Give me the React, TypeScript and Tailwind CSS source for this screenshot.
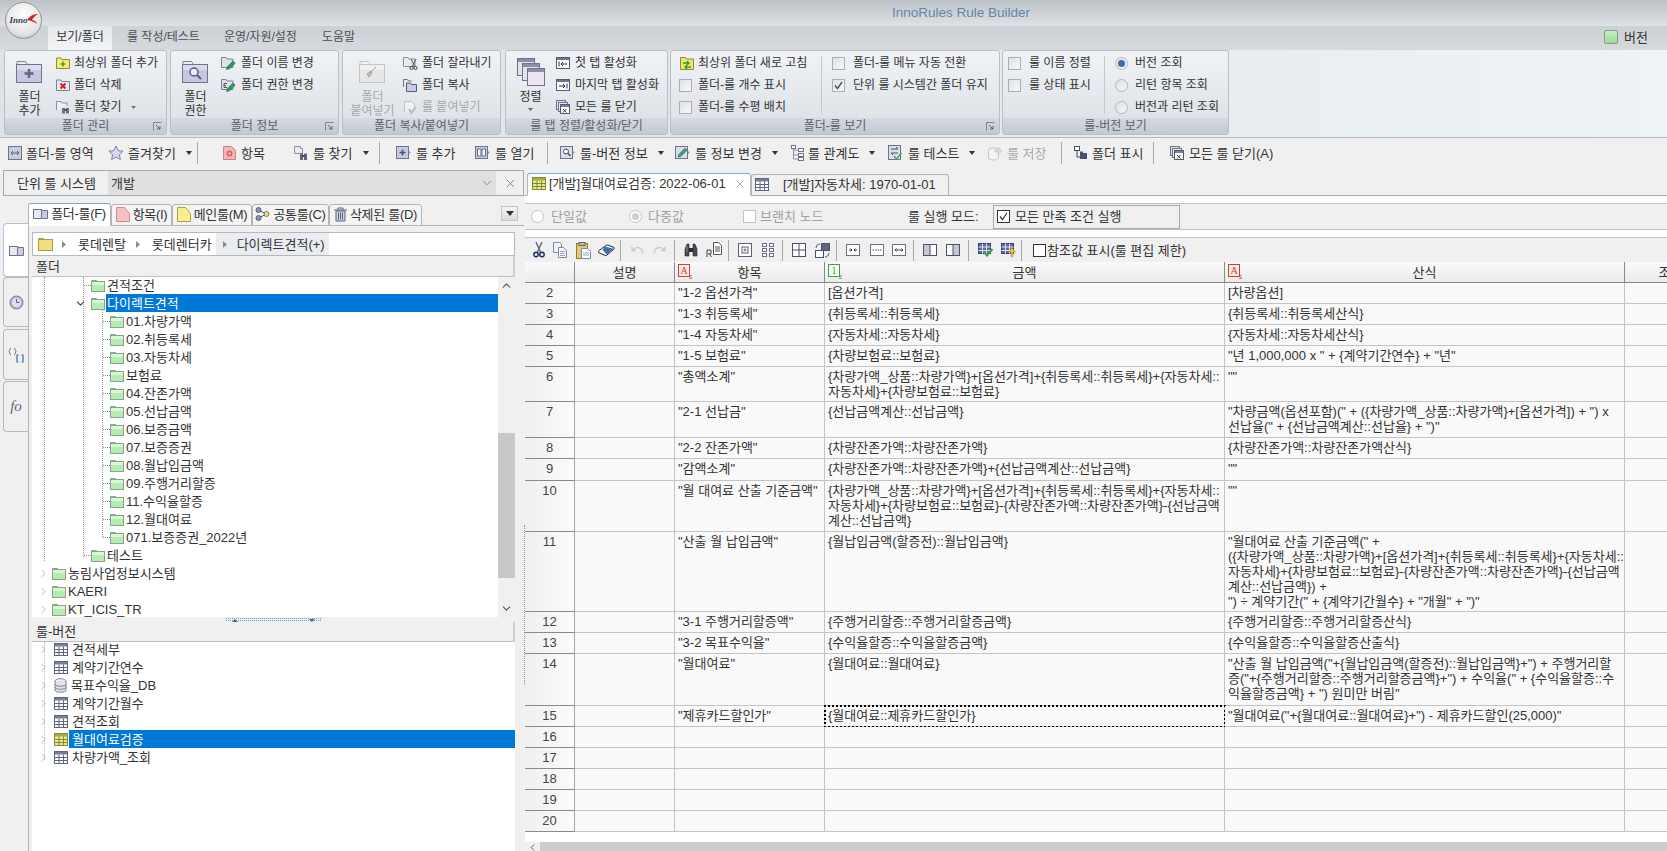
import type { ReactNode } from "react";
import { ChevronDown, ChevronRight, ChevronUp, ChevronLeft, X } from "lucide-react";

// small svg wrapper for the hand drawn toolbar icons
function Ico({ w = 16, h = 16, children }: { w?: number; h?: number; children: ReactNode }) {
  return (
    <svg width={w} height={h} viewBox={`0 0 ${w} ${h}`} className="shrink-0">
      {children}
    </svg>
  );
}

const folderPath = "M1.5 13.5V3h4.5l1 1.5h7.5v9z";

function BigFolder({ children, dim }: { children?: ReactNode; dim?: boolean }) {
  return (
    <Ico w={27} h={25}>
      <path d="M1 4V1.5h8.5L11 4" fill={dim ? "#f2f3f4" : "#eef0f5"} stroke={dim ? "#c8c8c8" : "#7d8292"} />
      <rect x="0.5" y="4.5" width="25" height="18" fill={dim ? "#e6e6e6" : "#c6c8e2"} stroke={dim ? "#c4c4c4" : "#6f7388"} />
      <rect x="1" y="5" width="24" height="5" fill={dim ? "#efefef" : "#dcdcee"} />
      {children}
    </Ico>
  );
}

function FolderPlus() {
  return (
    <Ico>
      <path d={folderPath} fill="#f3ec74" stroke="#8d8a3c" />
      <path d="M8 6.5v5M5.5 9h5" stroke="#5f9a2c" strokeWidth="1.6" />
    </Ico>
  );
}
function FolderX() {
  return (
    <Ico>
      <path d={folderPath} fill="#e9e9f2" stroke="#7d8292" />
      <path d="M5.5 6.5l5 5M10.5 6.5l-5 5" stroke="#d32020" strokeWidth="2" />
    </Ico>
  );
}
function FolderBinoc() {
  return (
    <Ico>
      <path d="M1.5 11V2.5h4.5l1 1.5h5v3" fill="#eef0f5" stroke="#8b8f9e" />
      <path d="M7 9h3v5.5H7zM11 9h3v5.5h-3z" fill="#6a7186" />
      <path d="M9.5 10h2v2h-2z" fill="#3f4556" />
    </Ico>
  );
}
function FolderPencil({ letter }: { letter?: boolean }) {
  return (
    <Ico>
      <path d="M1.5 12.5V2.5h4.5l1 1.5h6v8.5z" fill="#dde0ef" stroke="#7d8292" />
      {letter && <path d="M4 6.5h3M4 8.5h2M4 10.5h3M4 6.5v4" stroke="#555" fill="none" />}
      <path d="M6.5 14.5l1-3 5.5-5.5 2.2 2.2-5.5 5.5z" fill="#2f9a5c" stroke="#20663e" strokeWidth="0.6" />
    </Ico>
  );
}
function FolderCut() {
  return (
    <Ico>
      <path d="M1.5 11.5V2.5h4.5l1 1.5h6v7.5z" fill="#e8e9f2" stroke="#8b8f9e" />
      <path d="M9 4l3.5 7M14 4l-3.5 7" stroke="#555" />
      <circle cx="9.5" cy="13" r="1.6" fill="none" stroke="#444" />
      <circle cx="13.5" cy="13" r="1.6" fill="none" stroke="#444" />
    </Ico>
  );
}
function FolderCopy() {
  return (
    <Ico>
      <path d="M1.5 10V2.5h4l1 1.5h3" fill="#e8e9f2" stroke="#6f7388" />
      <path d="M4.5 14.5V6h4l1 1.5h5v7z" fill="#c9cbe4" stroke="#545a73" />
    </Ico>
  );
}
function PasteDim() {
  return (
    <Ico>
      <path d="M2.5 13V2.5h7l3 3V8" fill="#f0f0f0" stroke="#c2c2c2" />
      <path d="M7 10l2.5 4 4.5-6" fill="none" stroke="#b8b8b8" strokeWidth="1.6" />
    </Ico>
  );
}
function TabFirst({ last }: { last?: boolean }) {
  return (
    <Ico>
      <rect x="1.5" y="2.5" width="13" height="11" fill="#fff" stroke="#555b70" />
      <rect x="2" y="3" width="12" height="2" fill="#6f7590" />
      {last ? (
        <path d="M4 9h6M8 7l2 2-2 2M12 6.5v5" stroke="#2b2f3e" fill="none" />
      ) : (
        <path d="M12 9H6M8 7L6 9l2 2M4 6.5v5" stroke="#2b2f3e" fill="none" />
      )}
    </Ico>
  );
}
function CloseAll() {
  return (
    <Ico>
      <rect x="1.5" y="1.5" width="9" height="9" fill="#dfe0ea" stroke="#6f7388" />
      <rect x="3.5" y="3.5" width="9" height="9" fill="#e9e9f2" stroke="#6f7388" />
      <rect x="5.5" y="5.5" width="9" height="9" fill="#fff" stroke="#555b70" />
      <rect x="6" y="6" width="8" height="2" fill="#7d8298" />
      <path d="M8 10l3.5 3.5M11.5 10L8 13.5" stroke="#444" />
    </Ico>
  );
}
function FolderRefresh() {
  return (
    <Ico>
      <path d="M1.5 14.5V2.5h5l1 1.5h7v10.5z" fill="#eee46a" stroke="#8d8a3c" />
      <path d="M4 8h6M8 6l2 2-2 2" stroke="#3c9a32" fill="none" strokeWidth="1.3" />
      <path d="M12 12H6M8 10l-2 2 2 2" stroke="#3c9a32" fill="none" strokeWidth="1.3" />
    </Ico>
  );
}
function Stack() {
  return (
    <Ico w={30} h={30}>
      {[1, 6, 11].map((o, i) => (
        <g key={o}>
          <rect x={o + 0.5} y={o + 0.5} width="17" height="17" fill={i === 2 ? "#ece6f4" : "#e4e4ee"} stroke="#6f7388" />
          <rect x={o + 1} y={o + 1} width="16" height="3" fill="#8a90a6" />
        </g>
      ))}
    </Ico>
  );
}
function Check({ on, dim }: { on?: boolean; dim?: boolean }) {
  return (
    <span className={`flex h-[13px] w-[13px] shrink-0 items-center justify-center border ${dim ? "border-[#c4c8cc]" : "border-[#a9aeb4]"} bg-gradient-to-br from-[#dfe2e6] to-[#f6f7f8]`}>
      {on && (
        <svg width="9" height="9" viewBox="0 0 9 9">
          <path d="M1 4.5l2.5 3L8 1" stroke="#4a5468" strokeWidth="1.4" fill="none" />
        </svg>
      )}
    </span>
  );
}
function Radio({ on }: { on?: boolean }) {
  return (
    <span className="flex h-[13px] w-[13px] shrink-0 items-center justify-center rounded-full border border-[#b4b9bf] bg-gradient-to-br from-[#dde0e4] to-[#f5f6f7]">
      {on && <span className="h-[7px] w-[7px] rounded-full bg-[#3d6ea8]" />}
    </span>
  );
}

// ----- toolbar icons
function AreaIco() {
  return (
    <Ico w={14} h={14}>
      <rect x="0.5" y="0.5" width="13" height="13" fill="#c9cbe4" stroke="#6f7388" />
      <path d="M3 7h8M5 5L3 7l2 2M9 5l2 2-2 2" stroke="#5a6078" fill="none" />
    </Ico>
  );
}
function StarIco() {
  return (
    <Ico>
      <path d="M8 1l2.1 4.6 5 .6-3.7 3.4 1 5L8 12.1l-4.4 2.5 1-5L.9 6.2l5-.6z" fill="#d5d8ee" stroke="#7c82a8" />
    </Ico>
  );
}
function ItemIco() {
  return (
    <Ico w={15} h={16}>
      <path d="M1.5 1.5h8l4 4v9h-12z" fill="#f6b6b8" stroke="#c98085" />
      <circle cx="7.5" cy="8.5" r="3" fill="#e0666c" />
      <circle cx="7.5" cy="8.5" r="1" fill="#ffe0e0" />
    </Ico>
  );
}
function RuleFindIco() {
  return (
    <Ico>
      <path d="M1.5 1.5h6v2h2v5h-8z" fill="#e8e9f2" stroke="#8b8f9e" />
      <path d="M7 8.5h3V15H7zM11 8.5h3V15h-3z" fill="#5f667c" />
      <path d="M9.5 10h2v2h-2z" fill="#3f4556" />
    </Ico>
  );
}
function RuleAddIco() {
  return (
    <Ico>
      <rect x="0.5" y="1.5" width="12" height="12" fill="#c9cbe4" stroke="#6f7388" />
      <path d="M6.5 4.5v6M3.5 7.5h6" stroke="#4a5068" strokeWidth="1.6" />
      <path d="M13 6l2 1.5L13 9z" fill="#9a9eb4" />
    </Ico>
  );
}
function BookIco() {
  return (
    <Ico>
      <rect x="0.5" y="1.5" width="12" height="12" fill="#c9cbe4" stroke="#6f7388" />
      <path d="M2.5 4h3.5v7H2.5zM7 4h3.5v7H7z" fill="#f6f6fc" stroke="#4a5068" strokeWidth="0.8" />
      <path d="M13 6l2 1.5L13 9z" fill="#9a9eb4" />
    </Ico>
  );
}
function InfoIco() {
  return (
    <Ico>
      <rect x="0.5" y="1.5" width="12" height="12" fill="#dcdef0" stroke="#6f7388" />
      <circle cx="6" cy="6.5" r="2.5" fill="#fff" stroke="#3f4556" />
      <path d="M8 8.5l2.5 2.5" stroke="#3f4556" strokeWidth="1.4" />
      <path d="M13 6l2 1.5L13 9z" fill="#9a9eb4" />
    </Ico>
  );
}
function EditIco() {
  return (
    <Ico>
      <rect x="0.5" y="1.5" width="12" height="12" fill="#dcdef0" stroke="#6f7388" />
      <path d="M3 12l.8-2.6L10 3.2l2 2-6.2 6.2z" fill="#3fa36a" stroke="#20663e" strokeWidth="0.6" />
      <path d="M13 6l2 1.5L13 9z" fill="#9a9eb4" />
    </Ico>
  );
}
function TreeIco() {
  return (
    <Ico w={13} h={16}>
      <rect x="0.5" y="0.5" width="4" height="3" fill="#fff" stroke="#6f7388" />
      <rect x="7.5" y="3.5" width="5" height="3" fill="#fff" stroke="#6f7388" />
      <rect x="7.5" y="8.5" width="5" height="3" fill="#fff" stroke="#6f7388" />
      <rect x="7.5" y="12.5" width="5" height="3" fill="#fff" stroke="#6f7388" />
      <path d="M2.5 3.5V14h5M2.5 5h5M2.5 10h5" stroke="#8b8f9e" fill="none" />
    </Ico>
  );
}
function TestIco() {
  return (
    <Ico>
      <rect x="0.5" y="0.5" width="12" height="14" fill="#dcdef0" stroke="#6f7388" />
      <path d="M3 4h7l-2-2M10 8H3l2 2" stroke="#4a5068" fill="none" />
      <path d="M6 11l2.5 3 5-6" stroke="#4b9a5a" strokeWidth="1.3" fill="none" />
    </Ico>
  );
}
function SaveDimIco() {
  return (
    <Ico>
      <ellipse cx="6.5" cy="5" rx="5" ry="2" fill="none" stroke="#c6c6c6" />
      <path d="M1.5 5v8c0 1 2 2 5 2s5-1 5-2V5" fill="#f4f4f4" stroke="#c6c6c6" />
      <path d="M8 5h3V2l4 4-4 4V7H8z" fill="#dcdcdc" stroke="#c0c0c0" strokeWidth="0.6" />
    </Ico>
  );
}
function ShowFolderIco() {
  return (
    <Ico w={14} h={14}>
      <rect x="0.5" y="0.5" width="5" height="4" fill="#fff" stroke="#444a60" />
      <path d="M3 4.5V11h3" stroke="#444a60" fill="none" />
      <path d="M6 7h7v6H6z" fill="#47506e" />
      <path d="M6 7V5.5h3V7" fill="#47506e" />
    </Ico>
  );
}

// ----- grid toolbar icons
function Scissors() {
  return (
    <Ico w={12} h={16}>
      <path d="M3 0l4.5 10M9 0L4.5 10" stroke="#5f6680" strokeWidth="1.4" />
      <circle cx="3" cy="12.5" r="2.2" fill="none" stroke="#1f2a60" strokeWidth="1.4" />
      <circle cx="9" cy="12.5" r="2.2" fill="none" stroke="#1f2a60" strokeWidth="1.4" />
    </Ico>
  );
}
function CopyDocs() {
  return (
    <Ico w={14} h={16}>
      <path d="M.5.5h6l2 2v8h-8z" fill="#eef0fa" stroke="#7c86b0" />
      <path d="M5.5 5.5h5l3 3v7h-8z" fill="#f8f8ff" stroke="#7c86b0" />
      <path d="M7 9.5h5M7 11.5h5M7 13.5h5" stroke="#9aa3c8" />
    </Ico>
  );
}
function PasteDoc() {
  return (
    <Ico w={15} h={17}>
      <rect x="0.5" y="1.5" width="11" height="15" fill="#e8c86c" stroke="#8d7a3c" />
      <rect x="3" y="0.5" width="6" height="3" fill="#bdbdbd" stroke="#666" />
      <path d="M5.5 6.5h6l3 3v7h-9z" fill="#fff" stroke="#7c86b0" />
      <path d="M7 11h6M7 13h6" stroke="#9aa3c8" />
    </Ico>
  );
}
function Eraser() {
  return (
    <Ico w={17} h={14}>
      <path d="M.5 8L8 2.5c1-.7 2-.7 3 0l5 2c.5.5.5 1 0 1.5L9 12c-1 .7-2 .7-3 0L.7 9.5C.3 9 .3 8.4.5 8z" fill="#fff" stroke="#222" />
      <path d="M7 3.5l8.5 2.3L9 11.5 4.5 7z" fill="#3f6fb0" />
    </Ico>
  );
}
function Undo({ redo }: { redo?: boolean }) {
  return (
    <Ico w={14} h={12}>
      <g transform={redo ? "matrix(-1 0 0 1 14 0)" : undefined}>
        <path d="M2 2.5v4h4M2.5 6.5C4 3.5 9 2 12 6c.6 1 .8 2.2.5 3.5" stroke="#c6c9d2" strokeWidth="1.4" fill="none" />
      </g>
    </Ico>
  );
}
function Binoc() {
  return (
    <Ico w={14} h={14}>
      <path d="M1 13V6l2-5h2v12zM13 13V6l-2-5H9v12z" fill="#4a4a55" stroke="#2a2a30" strokeWidth="0.6" />
      <path d="M5 5h4v4H5z" fill="#2a2a30" />
      <path d="M3 3v6" stroke="#8a8a96" />
    </Ico>
  );
}
function ReplaceIco() {
  return (
    <Ico>
      <path d="M7.5.5h5l3 3v9h-8z" fill="#fff" stroke="#555" />
      <path d="M9 5h5M9 7h5M9 9h5" stroke="#555" />
      <path d="M1 15V8h4v4H2" fill="#e9e9f2" stroke="#444" />
      <path d="M3.5 12l2 3" stroke="#444" />
    </Ico>
  );
}
function BoxPlus() {
  return (
    <Ico w={14} h={14}>
      <rect x="0.5" y="0.5" width="13" height="13" fill="#fff" stroke="#5a6078" />
      <rect x="4" y="4" width="6" height="6" fill="#fff" stroke="#5a6078" />
      <path d="M7 5.5v3M5.5 7h3" stroke="#5a6078" />
    </Ico>
  );
}
function FourBox() {
  return (
    <Ico w={12} h={14}>
      {[0, 7].map((x) =>
        [0, 5, 10].map((y) => <rect key={`${x}-${y}`} x={x + 0.5} y={y + 0.5} width="4" height="3" fill="#fff" stroke="#6a7088" />)
      )}
    </Ico>
  );
}
function Table2() {
  return (
    <Ico w={14} h={14}>
      <rect x="0.5" y="0.5" width="13" height="13" fill="#fff" stroke="#4a5068" />
      <path d="M7 .5v13M.5 7h13" stroke="#4a5068" />
    </Ico>
  );
}
function Rotate() {
  return (
    <Ico w={15} h={15}>
      <rect x="6.5" y="0.5" width="8" height="7" fill="#5f6680" stroke="#4a5068" />
      <rect x="0.5" y="7.5" width="8" height="7" fill="#fff" stroke="#4a5068" />
      <path d="M1 5c.5-3 2-4 4-4M14 10c-.5 3-2 4-4 4" stroke="#4a5068" fill="none" />
    </Ico>
  );
}
function ColBox({ kind }: { kind: number }) {
  return (
    <Ico w={14} h={12}>
      <rect x="0.5" y="0.5" width="13" height="11" fill="#fff" stroke="#6a7088" />
      {kind === 0 && <path d="M3 6h3M4.5 4.5L6 6 4.5 7.5M11 6H8M9.5 4.5L8 6l1.5 1.5" stroke="#3a4058" fill="none" />}
      {kind === 1 && <path d="M2.5 6h9" stroke="#3a4058" strokeDasharray="1.5 1" />}
      {kind === 2 && <path d="M3 6h8M4.5 4.5L3 6l1.5 1.5M9.5 4.5L11 6 9.5 7.5" stroke="#3a4058" fill="none" />}
    </Ico>
  );
}
function Split({ right }: { right?: boolean }) {
  return (
    <Ico w={14} h={12}>
      <rect x="0.5" y="0.5" width="13" height="11" fill="#fff" stroke="#4a5068" />
      <rect x={right ? 7 : 1} y="1" width="6" height="10" fill="#c4c8d8" />
      <path d="M7 .5v11" stroke="#4a5068" />
    </Ico>
  );
}
function GridMark({ up }: { up?: boolean }) {
  return (
    <Ico w={15} h={14}>
      <rect x="0.5" y="0.5" width="12" height="10" fill="#5a6aa0" stroke="#3a4470" />
      <path d="M.5 4h12M.5 7.5h12M4.5.5v10M8.5.5v10" stroke="#dfe2f0" />
      {up ? <path d="M10 13.5V9H7.5L11 5l3.5 4H12v4.5z" fill="#f0c640" stroke="#9a7a20" strokeWidth="0.5" /> : <path d="M6 9l3 3.5L14.5 6" stroke="#4aa14a" strokeWidth="2.2" fill="none" />}
    </Ico>
  );
}
function ColIcon({ num }: { num?: boolean }) {
  const c = num ? "#4a9a4a" : "#c0453c";
  return (
    <Ico w={16} h={16}>
      <rect x="0.5" y="0.5" width="11" height="12" fill={num ? "#f4fbf2" : "#fbe8e2"} stroke={c} />
      <text x="6" y="10" fontSize="10" textAnchor="middle" fill={c} fontFamily="'Liberation Serif', serif">{num ? "1" : "A"}</text>
      <text x="12.5" y="15" fontSize="7" textAnchor="middle" fill={c} fontFamily="'Liberation Sans', sans-serif">{num ? "z" : "s"}</text>
    </Ico>
  );
}

function GreenFolder() {
  return (
    <Ico w={14} h={13}>
      <path d="M.5 3V1.5h5L6.5 3" fill="#e6f6e2" stroke="#8aa88a" />
      <rect x="0.5" y="2.5" width="13" height="10" fill="#b6ecb4" stroke="#88a48a" />
      <rect x="1" y="3" width="12" height="3" fill="#d8f6d4" />
    </Ico>
  );
}
function RuleGrid({ hot }: { hot?: boolean }) {
  return (
    <Ico w={14} h={13}>
      <rect x="0.5" y="0.5" width="13" height="12" fill={hot ? "#ece88a" : "#fff"} stroke={hot ? "#7f8a3c" : "#5f6480"} />
      <rect x="1" y="1" width="12" height="2.5" fill={hot ? "#a6ad4a" : "#7a7e98"} />
      <path d="M.5 6.5h13M.5 9.5h13M5 3.5v9M9.5 3.5v9" stroke={hot ? "#7f8a3c" : "#5f6480"} />
    </Ico>
  );
}
function Db() {
  return (
    <Ico w={13} h={15}>
      <ellipse cx="6.5" cy="3" rx="5.5" ry="2.3" fill="#f0f0f4" stroke="#7c8090" />
      <path d="M1 3v9c0 1.3 2.5 2.3 5.5 2.3S12 13.3 12 12V3" fill="#e2e2ea" stroke="#7c8090" />
      <path d="M1 6c0 1.3 2.5 2.3 5.5 2.3S12 7.3 12 6M1 9c0 1.3 2.5 2.3 5.5 2.3S12 10.3 12 9" fill="none" stroke="#7c8090" />
    </Ico>
  );
}

// ----- ribbon pieces
function SmallBtn({ icon, label, dim, arrow, gap = "gap-1" }: { icon: ReactNode; label: string; dim?: boolean; arrow?: boolean; gap?: string }) {
  return (
    <div className={`flex h-[22px] items-center whitespace-nowrap ${gap} ${dim ? "text-[#a8a8a8]" : "text-[#333]"}`}>
      {icon}
      <span>{label}</span>
      {arrow && (
        <svg width="5" height="3" viewBox="0 0 5 3" className="ml-[6px]">
          <path d="M0 0h5L2.5 3z" fill="#777" />
        </svg>
      )}
    </div>
  );
}

function Group({ title, width, launcher, children }: { title: string; width: string; launcher?: boolean; children: ReactNode }) {
  return (
    <div className={`flex h-[85px] shrink-0 flex-col overflow-hidden rounded-[3px] border border-[#b8bec6] bg-gradient-to-b from-[#f0f2f5] to-[#dbe0e6] ${width}`}>
      <div className="flex h-[68px] pt-px">{children}</div>
      <div className="relative flex h-[16px] items-center justify-center bg-gradient-to-b from-[#d5dae1] to-[#c3c9d2] text-[12px] leading-none text-[#5b6068]">
        {title}
        {launcher && (
          <svg width="9" height="9" viewBox="0 0 9 9" className="absolute right-[4px] top-[4px]">
            <path d="M.5 8.5v-8h8" fill="none" stroke="#7f858e" />
            <path d="M3 3l4 4M7 4v3H4" fill="none" stroke="#5b6068" />
          </svg>
        )}
      </div>
    </div>
  );
}

function BigBtn({ icon, lines, width, dim }: { icon: ReactNode; lines: string[]; width: string; dim?: boolean }) {
  return (
    <div className={`flex shrink-0 flex-col items-center pt-[8px] leading-[14px] ${width} ${dim ? "text-[#a8a8a8]" : "text-[#333]"}`}>
      {icon}
      <div className="mt-[5px] text-center whitespace-nowrap">
        {lines.map((l) => (
          <div key={l}>{l}</div>
        ))}
      </div>
    </div>
  );
}

function Ribbon() {
  return (
    <div className="flex h-[88px] border-b border-[#b4b8bc] bg-gradient-to-r from-[#dfe3e8] via-[#e4e8ec] to-[#eef3f5] pl-[4px]">
      <Group title="폴더 관리" width="w-[163px]" launcher>
        <BigBtn
          width="w-[49px]"
          lines={["폴더", "추가"]}
          icon={
            <BigFolder>
              <path d="M13 9v9M8.5 13.5h9" stroke="#5f6680" strokeWidth="2.6" />
            </BigFolder>
          }
        />
        <div className="ml-px flex flex-col">
          <SmallBtn icon={<FolderPlus />} label="최상위 폴더 추가" gap="gap-[3px]" />
          <SmallBtn icon={<FolderX />} label="폴더 삭제" gap="gap-[3px]" />
          <SmallBtn icon={<FolderBinoc />} label="폴더 찾기" gap="gap-[3px]" arrow />
        </div>
      </Group>
      <div className="w-[3px] shrink-0" />
      <Group title="폴더 정보" width="w-[169px]" launcher>
        <BigBtn
          width="w-[49px]"
          lines={["폴더", "권한"]}
          icon={
            <BigFolder>
              <circle cx="12" cy="12" r="4" fill="#eef0fa" stroke="#565c78" strokeWidth="1.5" />
              <path d="M15 15l4 4" stroke="#565c78" strokeWidth="2" />
            </BigFolder>
          }
        />
        <div className="flex flex-col">
          <SmallBtn icon={<FolderPencil />} label="폴더 이름 변경" gap="gap-[5px]" />
          <SmallBtn icon={<FolderPencil letter />} label="폴더 권한 변경" gap="gap-[5px]" />
        </div>
      </Group>
      <div className="w-[3px] shrink-0" />
      <Group title="폴더 복사/붙여넣기" width="w-[159px]">
        <BigBtn
          dim
          width="w-[59px]"
          lines={["폴더", "붙여넣기"]}
          icon={
            <BigFolder dim>
              <path d="M17 7l-6 6M12 11l-4 3 2 3 3-4z" stroke="#a4a4a4" fill="#bcbcbc" />
            </BigFolder>
          }
        />
        <div className="flex flex-col">
          <SmallBtn icon={<FolderCut />} label="폴더 잘라내기" gap="gap-[4px]" />
          <SmallBtn icon={<FolderCopy />} label="폴더 복사" gap="gap-[4px]" />
          <SmallBtn icon={<PasteDim />} label="룰 붙여넣기" gap="gap-[4px]" dim />
        </div>
      </Group>
      <div className="w-[4px] shrink-0" />
      <Group title="룰 탭 정렬/활성화/닫기" width="w-[163px]">
        <div className="flex w-[49px] shrink-0 flex-col items-center pt-[5px] leading-[14px] text-[#333]">
          <Stack />
          <div className="mt-[3px]">정렬</div>
          <svg width="5" height="3" viewBox="0 0 5 3" className="mt-[4px]">
            <path d="M0 0h5L2.5 3z" fill="#666" />
          </svg>
        </div>
        <div className="flex flex-col">
          <SmallBtn icon={<TabFirst />} label="첫 탭 활성화" />
          <SmallBtn icon={<TabFirst last />} label="마지막 탭 활성화" />
          <SmallBtn icon={<CloseAll />} label="모든 룰 닫기" />
        </div>
      </Group>
      <div className="w-[2px] shrink-0" />
      <Group title="폴더-룰 보기" width="w-[330px]" launcher>
        <div className="flex w-[150px] flex-col pl-[8px]">
          <SmallBtn icon={<FolderRefresh />} label="최상위 폴더 새로 고침" gap="gap-[3px]" />
          <SmallBtn icon={<Check />} label="폴더-룰 개수 표시" gap="gap-[6px]" />
          <SmallBtn icon={<Check />} label="폴더-룰 수평 배치" gap="gap-[6px]" />
        </div>
        <div className="my-[4px] w-px bg-[#c4c9cf]" />
        <div className="flex flex-col pl-[10px]">
          <SmallBtn icon={<Check />} label="폴더-룰 메뉴 자동 전환" gap="gap-[8px]" />
          <SmallBtn icon={<Check on />} label="단위 룰 시스템간 폴더 유지" gap="gap-[8px]" />
        </div>
      </Group>
      <div className="w-[2px] shrink-0" />
      <Group title="룰-버전 보기" width="w-[227px]">
        <div className="flex w-[101px] flex-col pl-[5px]">
          <SmallBtn icon={<Check />} label="룰 이름 정렬" gap="gap-[8px]" />
          <SmallBtn icon={<Check />} label="룰 상태 표시" gap="gap-[8px]" />
        </div>
        <div className="my-[4px] w-px bg-[#c4c9cf]" />
        <div className="flex flex-col pl-[10px]">
          <SmallBtn icon={<Radio on />} label="버전 조회" gap="gap-[7px]" />
          <SmallBtn icon={<Radio />} label="리턴 항목 조회" gap="gap-[7px]" />
          <SmallBtn icon={<Radio />} label="버전과 리턴 조회" gap="gap-[7px]" />
        </div>
      </Group>
    </div>
  );
}

function Tool({ icon, label, width, arrow, dim }: { icon: ReactNode; label: string; width: string; arrow?: boolean; dim?: boolean }) {
  return (
    <div className={`flex shrink-0 items-center gap-[4px] whitespace-nowrap ${width} ${dim ? "text-[#a8a8a8]" : "text-[#333]"}`}>
      {icon}
      <span>{label}</span>
      {arrow && (
        <svg width="6" height="4" viewBox="0 0 6 4" className="ml-[6px] shrink-0">
          <path d="M0 0h6L3 4z" fill="#333" />
        </svg>
      )}
    </div>
  );
}
const ToolSep = () => <div className="h-[22px] w-px shrink-0 bg-[#a9a9a9]" />;

function MainToolbar() {
  return (
    <div className="flex h-[30px] items-center bg-[#f0f0f0] pl-[8px] text-[13px]">
      <Tool width="w-[100px]" icon={<AreaIco />} label="폴더-룰 영역" />
      <Tool width="w-[89px]" icon={<StarIco />} label="즐겨찾기" arrow />
      <ToolSep />
      <Tool width="ml-[24px] w-[71px]" icon={<ItemIco />} label="항목" />
      <Tool width="w-[86px]" icon={<RuleFindIco />} label="룰 찾기" arrow />
      <ToolSep />
      <Tool width="ml-[16px] w-[79px]" icon={<RuleAddIco />} label="룰 추가" />
      <Tool width="w-[72px]" icon={<BookIco />} label="룰 열기" />
      <ToolSep />
      <Tool width="ml-[12px] w-[115px]" icon={<InfoIco />} label="룰-버전 정보" arrow />
      <Tool width="w-[116px]" icon={<EditIco />} label="룰 정보 변경" arrow />
      <Tool width="w-[97px]" icon={<TreeIco />} label="룰 관계도" arrow />
      <Tool width="w-[99px]" icon={<TestIco />} label="룰 테스트" arrow />
      <Tool width="w-[74px]" icon={<SaveDimIco />} label="룰 저장" dim />
      <ToolSep />
      <Tool width="ml-[12px] w-[79px]" icon={<ShowFolderIco />} label="폴더 표시" />
      <ToolSep />
      <Tool width="ml-[15px] w-[120px]" icon={<CloseAll />} label="모든 룰 닫기(A)" />
    </div>
  );
}

// ----- left side
const leftTabs = [
  { label: "폴더-룰(F)", w: "w-[83px]", icon: <TabFolder />, on: true },
  { label: "항목(I)", w: "w-[61px]", icon: <TabDoc fill="#f9c0c4" stroke="#d48a90" /> },
  { label: "메인룰(M)", w: "w-[80px]", icon: <TabDoc fill="#f7ef8a" stroke="#a8a04a" /> },
  { label: "공통룰(C)", w: "w-[77px]", icon: <TabShare /> },
  { label: "삭제된 룰(D)", w: "w-[93px]", icon: <TabTrash /> },
];
function TabFolder() {
  return (
    <Ico w={15} h={13}>
      <rect x="0.5" y="2.5" width="8" height="9" fill="#e6e8f4" stroke="#6f7388" />
      <path d="M8.5 3.5h6v8h-6z" fill="#c9cbe4" stroke="#6f7388" />
    </Ico>
  );
}
function TabDoc({ fill, stroke }: { fill: string; stroke: string }) {
  return (
    <Ico w={14} h={15}>
      <path d="M.5.5h8l5 6v8H.5z" fill={fill} stroke={stroke} />
    </Ico>
  );
}
function TabShare() {
  return (
    <Ico w={15} h={14}>
      <circle cx="3.5" cy="3" r="2.5" fill="#8e94ac" stroke="#5a6078" />
      <circle cx="3.5" cy="11" r="2.5" fill="#8e94ac" stroke="#5a6078" />
      <circle cx="11.5" cy="7" r="2.5" fill="#e8d890" stroke="#8a7a40" />
      <path d="M5.5 4l4 2M5.5 10l4-2" stroke="#5a6078" />
    </Ico>
  );
}
function TabTrash() {
  return (
    <Ico w={13} h={15}>
      <path d="M0 3h13M4 3V1h5v2" stroke="#5a6078" fill="none" />
      <path d="M2 4h9v10H2z" fill="#d4d6e2" stroke="#5a6078" />
      <path d="M4.5 5.5v7M6.5 5.5v7M8.5 5.5v7" stroke="#5a6078" />
    </Ico>
  );
}

const treeRows: { label: string; lv: number; open?: boolean; hot?: boolean; leaf?: boolean }[] = [
  { label: "견적조건", lv: 1, leaf: true },
  { label: "다이렉트견적", lv: 1, open: true, hot: true },
  { label: "01.차량가액", lv: 2 },
  { label: "02.취등록세", lv: 2 },
  { label: "03.자동차세", lv: 2 },
  { label: "보험료", lv: 2 },
  { label: "04.잔존가액", lv: 2 },
  { label: "05.선납금액", lv: 2 },
  { label: "06.보증금액", lv: 2 },
  { label: "07.보증증권", lv: 2 },
  { label: "08.월납입금액", lv: 2 },
  { label: "09.주행거리할증", lv: 2 },
  { label: "11.수익율할증", lv: 2 },
  { label: "12.월대여료", lv: 2 },
  { label: "071.보증증권_2022년", lv: 2 },
  { label: "테스트", lv: 1, leaf: true },
  { label: "농림사업정보시스템", lv: 0 },
  { label: "KAERI", lv: 0 },
  { label: "KT_ICIS_TR", lv: 0 },
];

function TreeRow({ row }: { row: (typeof treeRows)[number] }) {
  const pad = row.lv === 0 ? "pl-[20px]" : row.lv === 1 ? "pl-[59px]" : "pl-[78px]";
  return (
    <div className={`relative flex h-[18px] shrink-0 items-center ${pad}`}>
      {row.lv === 0 && <ChevronRight size={13} strokeWidth={1.5} className="absolute left-[5px] text-[#a8a8a8]" />}
      {row.open && <ChevronDown size={13} strokeWidth={2} className="absolute left-[42px] text-[#444]" />}
      {row.lv === 2 && <span className="absolute left-[71px] w-[7px] border-t border-dotted border-[#888]" />}
      {row.leaf && <span className="absolute left-[52px] w-[7px] border-t border-dotted border-[#888]" />}
      <GreenFolder />
      <span className={`ml-px flex h-[18px] flex-1 items-center pl-px ${row.hot ? "bg-[#0078d7] text-white" : ""}`}>{row.label}</span>
    </div>
  );
}

const ruleRows = [
  { label: "견적세부" },
  { label: "계약기간연수" },
  { label: "목표수익율_DB", db: true },
  { label: "계약기간월수" },
  { label: "견적조회" },
  { label: "월대여료검증", hot: true },
  { label: "차량가액_조회" },
];

function LeftPanel() {
  return (
    <div className="flex w-[524px] shrink-0 flex-col">
      <div className="ml-[3px] mt-[2px] flex h-[26px] items-center border border-[#a8a8a8] pr-[6px] text-[13px] text-[#333]">
        <span className="w-[104px] pl-[13px]">단위 룰 시스템</span>
        <div className="flex h-[24px] flex-1 items-center justify-between bg-[#e0e0e0] pl-[3px] pr-[2px]">
          개발
          <ChevronDown size={14} strokeWidth={1.4} className="text-[#777]" />
        </div>
        <X size={13} strokeWidth={1.6} className="ml-[8px] text-[#777]" />
      </div>
      <div className="mt-[7px] flex min-h-0 flex-1">
        <div className="ml-[3px] flex w-[25px] shrink-0 flex-col pt-[20px] text-[#6f7388]">
          <div className="flex h-[54px] items-center justify-center rounded-l-[4px] border border-r-0 border-[#a9c4dc] bg-white">
            <TabFolder />
          </div>
          <div className="flex h-[50px] items-center justify-center rounded-l-[4px] border border-r-0 border-[#b8b8b8] bg-[#f0f0f0]">
            <svg width="15" height="15" viewBox="0 0 15 15">
              <circle cx="7.5" cy="7.5" r="6.5" fill="#b4b6cc" stroke="#7c8098" />
              <circle cx="7.5" cy="7.5" r="4.5" fill="#dfe0ec" />
              <path d="M7.5 4v3.5h3" stroke="#5a5e78" fill="none" />
            </svg>
          </div>
          <div className="mt-[2px] flex h-[51px] items-center justify-center rounded-l-[4px] border border-r-0 border-[#b8b8b8] bg-[#f0f0f0]">
            {/* braces and brackets glyph */}
            <svg width="16" height="16" viewBox="0 0 16 16">
              <path d="M3 1C1.5 1 2 4 1 4.5 2 5 1.5 8 3 8M6 1c1.5 0 1 3 2 3.5C7 5 7.5 8 6 8" stroke="#5f6a80" fill="none" />
              <path d="M10.5 8H9v7h1.5M13.5 8H15v7h-1.5" stroke="#3f6fa8" fill="none" strokeWidth="1.2" />
            </svg>
          </div>
          <div className="mt-px flex h-[51px] items-center justify-center rounded-l-[4px] border border-r-0 border-[#b8b8b8] bg-[#f0f0f0] font-['Liberation_Serif',serif] text-[15px] italic text-[#5f6a80]">
            fo
          </div>
        </div>
        <div className="flex min-w-0 flex-1 flex-col">
          <div className="relative z-10 flex h-[23px] shrink-0 items-end text-[13px]">
            {leftTabs.map((t) => (
              <div
                key={t.label}
                className={`flex shrink-0 items-center justify-center gap-[3px] rounded-t-[3px] border border-[#b4b4b4] pb-[2px] ${t.w} ${t.on ? "h-[23px] border-b-white border-t-[#7fa7c9] bg-white" : "h-[22px] bg-[#f4f4f4]"} whitespace-nowrap text-[#333]`}
              >
                {t.icon}
                <span className="tracking-[-0.3px]">{t.label}</span>
              </div>
            ))}
            <div className="mb-[5px] ml-[79px] flex h-[15px] w-[17px] items-center justify-center border border-[#c4c4c4] bg-gradient-to-b from-[#f4f4f4] to-[#dcdcdc]">
              <svg width="8" height="5" viewBox="0 0 8 5">
                <path d="M0 0h8L4 5z" fill="#333" />
              </svg>
            </div>
          </div>
          <div className="-mt-px flex min-h-0 flex-1 flex-col border-l border-t border-[#b4b4b4] bg-[#f0f0f0] pl-[3px] pr-[9px] pt-[6px] text-[13px] text-[#333]">
            <div className="flex h-[24px] shrink-0 items-center border border-[#b8b8b8] bg-white pl-[5px]">
              <svg width="15" height="14" viewBox="0 0 15 14" className="shrink-0">
                <path d="M.5 3V1.5h5L7 3" fill="#f5ec9a" stroke="#a89a50" />
                <rect x="0.5" y="2.5" width="14" height="11" fill="#f0e07a" stroke="#a89a50" />
              </svg>
              <Crumb className="ml-[9px]" />
              <span className="ml-[12px]">롯데렌탈</span>
              <Crumb className="ml-[10px]" />
              <span className="ml-[12px]">롯데렌터카</span>
              <div className="ml-[4px] flex h-[22px] w-[113px] items-center whitespace-nowrap bg-[#e9edf1] pl-[7px]">
                <Crumb />
                <span className="ml-[10px]">다이렉트견적(+)</span>
              </div>
            </div>
            <PaneHeader label="폴더" className="h-[21px]" />
            <div className="relative flex h-[340px] shrink-0 overflow-hidden bg-white">
              <span className="absolute bottom-[56px] left-[12px] top-0 border-l border-dotted border-[#999]" />
              <span className="absolute left-[51px] top-0 h-[280px] border-l border-dotted border-[#999]" />
              <span className="absolute left-[70px] top-[27px] h-[233px] border-l border-dotted border-[#999]" />
              <div className="-mt-px flex min-w-0 flex-1 flex-col">
                {treeRows.map((r) => (
                  <TreeRow key={r.label} row={r} />
                ))}
              </div>
              <div className="flex w-[17px] shrink-0 flex-col items-center bg-[#f0f0f0] text-[#555]">
                <ChevronUp size={13} strokeWidth={2} className="mt-[2px]" />
                <div className="mt-[141px] h-[145px] w-full bg-[#c8c8c8]" />
                <div className="flex-1" />
                <ChevronDown size={13} strokeWidth={2} className="mb-[2px]" />
              </div>
            </div>
            <div className="flex h-[5px] shrink-0 items-center justify-center">
              <div className="relative h-[3px] w-[95px] border-y border-dotted border-[#7a9ac0]">
                <span className="absolute left-[6px] top-0 h-0 w-0 border-x-[3px] border-b-[3px] border-x-transparent border-b-[#3f6fa8]" />
                <span className="absolute right-[6px] top-0 h-0 w-0 border-x-[3px] border-t-[3px] border-x-transparent border-t-[#3f6fa8]" />
              </div>
            </div>
            <PaneHeader label="룰-버전" className="h-[20px]" />
            <div className="relative flex-1 overflow-hidden bg-white">
              <span className="absolute left-[12px] top-0 h-[118px] border-l border-dotted border-[#bbb]" />
              <div className="-mt-[2px]">
                {ruleRows.map((r) => (
                  <div key={r.label} className="relative flex h-[18px] items-center pl-[22px]">
                    <ChevronRight size={13} strokeWidth={1.5} className="absolute left-[5px] text-[#a8a8a8]" />
                    {r.db ? <Db /> : <RuleGrid hot={r.hot} />}
                    <span className={`ml-px flex h-[18px] flex-1 items-center pl-[3px] ${r.hot ? "bg-[#0078d7] text-white" : ""}`}>{r.label}</span>
                  </div>
                ))}
              </div>
            </div>
          </div>
        </div>
      </div>
    </div>
  );
}

function Crumb({ className = "" }: { className?: string }) {
  return (
    <svg width="4" height="7" viewBox="0 0 4 7" className={`shrink-0 ${className}`}>
      <path d="M0 0l4 3.5L0 7z" fill="#8a8a8a" />
    </svg>
  );
}

function PaneHeader({ label, className }: { label: string; className: string }) {
  return <div className={`flex shrink-0 items-center border-b border-r-2 border-[#d0d0d0] border-b-[#c0c0c0] bg-[#f0f0f0] pl-[4px] ${className}`}>{label}</div>;
}

// ----- right side
type GridRow = { no: number; h: string; item?: string; amount?: string[]; formula?: string[]; focus?: boolean };

const gridRows: GridRow[] = [
  { no: 2, h: "h-[21px]", item: '"1-2 옵션가격"', amount: ["[옵션가격]"], formula: ["[차량옵션]"] },
  { no: 3, h: "h-[21px]", item: '"1-3 취등록세"', amount: ["{취등록세::취등록세}"], formula: ["{취등록세::취등록세산식}"] },
  { no: 4, h: "h-[21px]", item: '"1-4 자동차세"', amount: ["{자동차세::자동차세}"], formula: ["{자동차세::자동차세산식}"] },
  { no: 5, h: "h-[21px]", item: '"1-5 보험료"', amount: ["{차량보험료::보험료}"], formula: ['"년 1,000,000 x " + {계약기간연수} + "년"'] },
  { no: 6, h: "h-[35px]", item: '"총액소계"', amount: ["{차량가액_상품::차량가액}+[옵션가격]+{취등록세::취등록세}+{자동차세::", "자동차세}+{차량보험료::보험료}"], formula: ['""'] },
  { no: 7, h: "h-[36px]", item: '"2-1 선납금"', amount: ["{선납금액계산::선납금액}"], formula: ['"차량금액(옵션포함)(" + ({차량가액_상품::차량가액}+[옵션가격]) + ") x', '선납율(" + {선납금액계산::선납율} + ")"'] },
  { no: 8, h: "h-[21px]", item: '"2-2 잔존가액"', amount: ["{차량잔존가액::차량잔존가액}"], formula: ["{차량잔존가액::차량잔존가액산식}"] },
  { no: 9, h: "h-[22px]", item: '"감액소계"', amount: ["{차량잔존가액::차량잔존가액}+{선납금액계산::선납금액}"], formula: ['""'] },
  { no: 10, h: "h-[51px]", item: '"월 대여료 산출 기준금액"', amount: ["{차량가액_상품::차량가액}+[옵션가격]+{취등록세::취등록세}+{자동차세::", "자동차세}+{차량보험료::보험료}-{차량잔존가액::차량잔존가액}-{선납금액", "계산::선납금액}"], formula: ['""'] },
  { no: 11, h: "h-[80px]", item: '"산출 월 납입금액"', amount: ["{월납입금액(할증전)::월납입금액}"], formula: ['"월대여료 산출 기준금액(" +', "({차량가액_상품::차량가액}+[옵션가격]+{취등록세::취등록세}+{자동차세::", "자동차세}+{차량보험료::보험료}-{차량잔존가액::차량잔존가액}-{선납금액", "계산::선납금액}) +", '") ÷ 계약기간(" + {계약기간월수} + "개월" + ")"'] },
  { no: 12, h: "h-[21px]", item: '"3-1 주행거리할증액"', amount: ["{주행거리할증::주행거리할증금액}"], formula: ["{주행거리할증::주행거리할증산식}"] },
  { no: 13, h: "h-[21px]", item: '"3-2 목표수익율"', amount: ["{수익율할증::수익율할증금액}"], formula: ["{수익율할증::수익율할증산출식}"] },
  { no: 14, h: "h-[52px]", item: '"월대여료"', amount: ["{월대여료::월대여료}"], formula: ['"산출 월 납입금액("+{월납입금액(할증전)::월납입금액}+") + 주행거리할', '증("+{주행거리할증::주행거리할증금액}+") + 수익율(" + {수익율할증::수', '익율할증금액} + ") 원미만 버림"'] },
  { no: 15, h: "h-[21px]", item: '"제휴카드할인가"', amount: ["{월대여료::제휴카드할인가}"], formula: ['"월대여료("+{월대여료::월대여료}+") - 제휴카드할인(25,000)"'], focus: true },
  { no: 16, h: "h-[21px]" },
  { no: 17, h: "h-[21px]" },
  { no: 18, h: "h-[21px]" },
  { no: 19, h: "h-[21px]" },
  { no: 20, h: "h-[21px]" },
];

const gridCols = "grid grid-cols-[50px_100px_150px_400px_400px_80px]";
const cellBase = "overflow-hidden whitespace-nowrap border-b border-r border-[#c4c4c4] bg-[#f9f9f9] pl-[3px] pt-[2px] leading-[15px]";

function Cell({ lines, focus }: { lines?: string[]; focus?: boolean }) {
  return (
    <div className={`${cellBase} ${focus ? "outline-2 -outline-offset-1 outline-dotted outline-black" : ""}`}>
      {lines?.map((l) => (
        <div key={l}>{l}</div>
      ))}
    </div>
  );
}

function HeaderCell({ label, icon }: { label?: string; icon?: ReactNode }) {
  return (
    <div className="relative flex items-center justify-center border-b border-r border-[#8a8a8a] bg-gradient-to-b from-[#fafafa] to-[#ebebeb]">
      {icon && <span className="absolute left-[3px] top-[2px]">{icon}</span>}
      {label}
    </div>
  );
}

function Grid() {
  return (
    <div className="flex-1 overflow-hidden bg-white text-[13px] text-[#333]">
      <div className={`${gridCols} h-[21px]`}>
        <HeaderCell />
        <HeaderCell label="설명" />
        <HeaderCell label="항목" icon={<ColIcon />} />
        <HeaderCell label="금액" icon={<ColIcon num />} />
        <HeaderCell label="산식" icon={<ColIcon />} />
        <HeaderCell label="조" />
      </div>
      {gridRows.map((r) => (
        <div key={r.no} className={`${gridCols} ${r.h}`}>
          <div className="border-b border-r border-b-[#8a8a8a] border-r-[#a8a8a8] bg-gradient-to-r from-[#f0f0f0] to-[#fbfbfb] pt-[2px] text-center font-['Liberation_Sans',sans-serif] leading-[15px] text-[#444]">
            {r.no}
          </div>
          <Cell />
          <Cell lines={r.item ? [r.item] : undefined} />
          <Cell lines={r.amount} focus={r.focus} />
          <Cell lines={r.formula} />
          <Cell />
        </div>
      ))}
    </div>
  );
}

const GSep = ({ w }: { w: string }) => <div className={`h-[21px] w-px shrink-0 bg-[#a8a8a8] ${w}`} />;

function GridToolbar() {
  return (
    <div className="flex h-[25px] shrink-0 items-center border-t border-[#c4c4c4] bg-[#f0f0f0] pl-[8px] text-[13px] text-[#333]">
      <Scissors />
      <span className="w-[8px]" />
      <CopyDocs />
      <span className="w-[9px]" />
      <PasteDoc />
      <span className="w-[7px]" />
      <Eraser />
      <GSep w="ml-[5px] mr-[9px]" />
      <Undo />
      <span className="w-[9px]" />
      <Undo redo />
      <GSep w="ml-[7px] mr-[9px]" />
      <Binoc />
      <span className="w-[8px]" />
      <ReplaceIco />
      <GSep w="ml-[6px] mr-[9px]" />
      <BoxPlus />
      <span className="w-[10px]" />
      <FourBox />
      <GSep w="ml-[8px] mr-[9px]" />
      <Table2 />
      <span className="w-[9px]" />
      <Rotate />
      <GSep w="ml-[6px] mr-[9px]" />
      <ColBox kind={0} />
      <span className="w-[10px]" />
      <ColBox kind={1} />
      <span className="w-[8px]" />
      <ColBox kind={2} />
      <GSep w="ml-[7px] mr-[9px]" />
      <Split />
      <span className="w-[9px]" />
      <Split right />
      <GSep w="ml-[8px] mr-[9px]" />
      <GridMark />
      <span className="w-[8px]" />
      <GridMark up />
      <GSep w="ml-[5px] mr-[11px]" />
      <span className="h-[13px] w-[13px] shrink-0 border border-[#333] bg-white" />
      <span className="ml-[1px] whitespace-nowrap">참조값 표시(룰 편집 제한)</span>
    </div>
  );
}

function RightPanel() {
  return (
    <div className="flex min-w-0 flex-1 flex-col">
      <div className="mt-[5px] flex h-[23px] shrink-0 items-end border-b border-[#a8a8a8] pl-[2px] text-[13px] text-[#333]">
        <div className="-mb-px flex h-[23px] w-[224px] shrink-0 items-center rounded-t-[3px] border border-[#b4b4b4] border-b-white border-t-[#7fa7c9] bg-white pb-[2px] pl-[4px] whitespace-nowrap">
          <RuleGrid hot />
          <span className="ml-[3px]">[개발]월대여료검증: 2022-06-01</span>
          <X size={12} strokeWidth={2} className="ml-auto mr-[4px] text-[#aaa]" />
        </div>
        <div className="flex h-[21px] w-[198px] shrink-0 items-center rounded-t-[3px] border border-b-0 border-[#b4b4b4] bg-[#f0f0f0] pb-[1px] pl-[3px] whitespace-nowrap">
          <RuleGrid />
          <span className="ml-[14px]">[개발]자동차세: 1970-01-01</span>
        </div>
      </div>
      <div className="h-[7px] shrink-0 bg-white" />
      <div className="flex h-[27px] shrink-0 items-center border-y border-[#c0c0c0] bg-[#f0f0f0] pl-[6px] text-[13px]">
        <div className="flex w-[98px] items-center text-[#a0a0a0]">
          <span className="h-[13px] w-[13px] rounded-full border border-[#c4c4c4] bg-white" />
          <span className="ml-[7px]">단일값</span>
        </div>
        <div className="flex w-[114px] items-center text-[#a0a0a0]">
          <span className="flex h-[13px] w-[13px] items-center justify-center rounded-full border border-[#c4c4c4] bg-white">
            <span className="h-[7px] w-[7px] rounded-full bg-[#cfcfcf]" />
          </span>
          <span className="ml-[6px]">다중값</span>
        </div>
        <div className="flex w-[165px] items-center text-[#a0a0a0]">
          <span className="h-[13px] w-[13px] border border-[#c4c4c4] bg-white" />
          <span className="ml-[4px]">브랜치 노드</span>
        </div>
        <span className="w-[85px] whitespace-nowrap text-[#333]">룰 실행 모드:</span>
        <div className="flex h-[24px] w-[187px] items-center border border-[#a8a8a8] pl-[3px] text-[#333]">
          <span className="flex h-[13px] w-[13px] items-center justify-center border border-[#333] bg-white">
            <svg width="9" height="9" viewBox="0 0 9 9">
              <path d="M1 4.5l2.5 3L8 1" stroke="#333" strokeWidth="1.2" fill="none" />
            </svg>
          </span>
          <span className="ml-[5px]">모든 만족 조건 실행</span>
        </div>
      </div>
      <div className="h-[7px] shrink-0 bg-white" />
      <GridToolbar />
      <Grid />
      <div className="flex h-[19px] shrink-0 flex-col">
        <div className="h-[10px] bg-white" />
        <div className="flex h-[9px] items-start bg-[#f0f0f0] pl-[2px]">
          <ChevronLeft size={11} strokeWidth={2} className="shrink-0 text-[#555]" />
          <div className="ml-[2px] h-full flex-1 bg-[#cdcdcd]" />
        </div>
      </div>
    </div>
  );
}

function Splitter() {
  return (
    <div className="w-px shrink-0 bg-[#f0f0f0] pt-[357px]">
      <div className="h-[160px] border-l border-dotted border-[#7a9ac0]" />
    </div>
  );
}

export default function App() {
  return (
    <div className="relative flex h-[851px] w-[1667px] flex-col overflow-hidden bg-[#f0f0f0] font-['Liberation_Sans','Noto_Sans_CJK_KR',sans-serif] text-[12px] leading-[15px]">
      {/* logo overlaps the title bar and the tab strip */}
      <div className="absolute left-[5px] top-[2px] z-20 flex h-[37px] w-[37px] items-center justify-center rounded-full border border-[#8f9499] bg-[radial-gradient(circle_at_50%_35%,#ffffff,#e4e4e4_65%,#a9a9a9)]">
        <span className="font-['Liberation_Serif',serif] text-[9px] font-bold italic text-[#3a3a50]">Inno</span>
        <svg width="11" height="12" viewBox="0 0 11 12" className="-ml-px -mt-[3px]">
          <path d="M0 7C3 3 6 1 11 1 8 3 6 5 5 7c2 0 4 1 5 4-2-2-5-3-10-4z" fill="#c8282a" />
        </svg>
      </div>

      <div className="flex h-[26px] shrink-0 items-center justify-center bg-gradient-to-b from-[#bcc2c7] to-[#dfe2e5] pb-[2px] pl-[255px] text-[13.5px] text-[#5f86ad]">
        InnoRules Rule Builder
      </div>
      <div className="flex h-[24px] shrink-0 items-end bg-gradient-to-b from-[#ccd1d5] to-[#d6dade] pl-[48px] text-[12px] text-[#4a4f55]">
        <div className="flex h-[24px] w-[64px] items-center justify-center rounded-t-[2px] bg-gradient-to-b from-[#e6e9ec] to-[#f2f4f6] pb-[2px] text-[#333]">보기/폴더</div>
        <span className="ml-[15px] flex h-[24px] items-center pb-[2px]">룰 작성/테스트</span>
        <span className="ml-[24px] flex h-[24px] items-center pb-[2px]">운영/자원/설정</span>
        <span className="ml-[25px] flex h-[24px] items-center pb-[2px]">도움말</span>
        <div className="ml-auto flex h-[24px] items-center pb-[2px] pr-[19px] text-[13px] text-[#333]">
          <span className="h-[14px] w-[14px] rounded-[2px] border border-[#7fa07f] bg-gradient-to-b from-[#c8eec4] to-[#9fd99c]" />
          <span className="ml-[6px]">버전</span>
        </div>
      </div>
      <Ribbon />
      <MainToolbar />
      <div className="flex min-h-0 flex-1">
        <LeftPanel />
        <Splitter />
        <RightPanel />
      </div>
    </div>
  );
}
